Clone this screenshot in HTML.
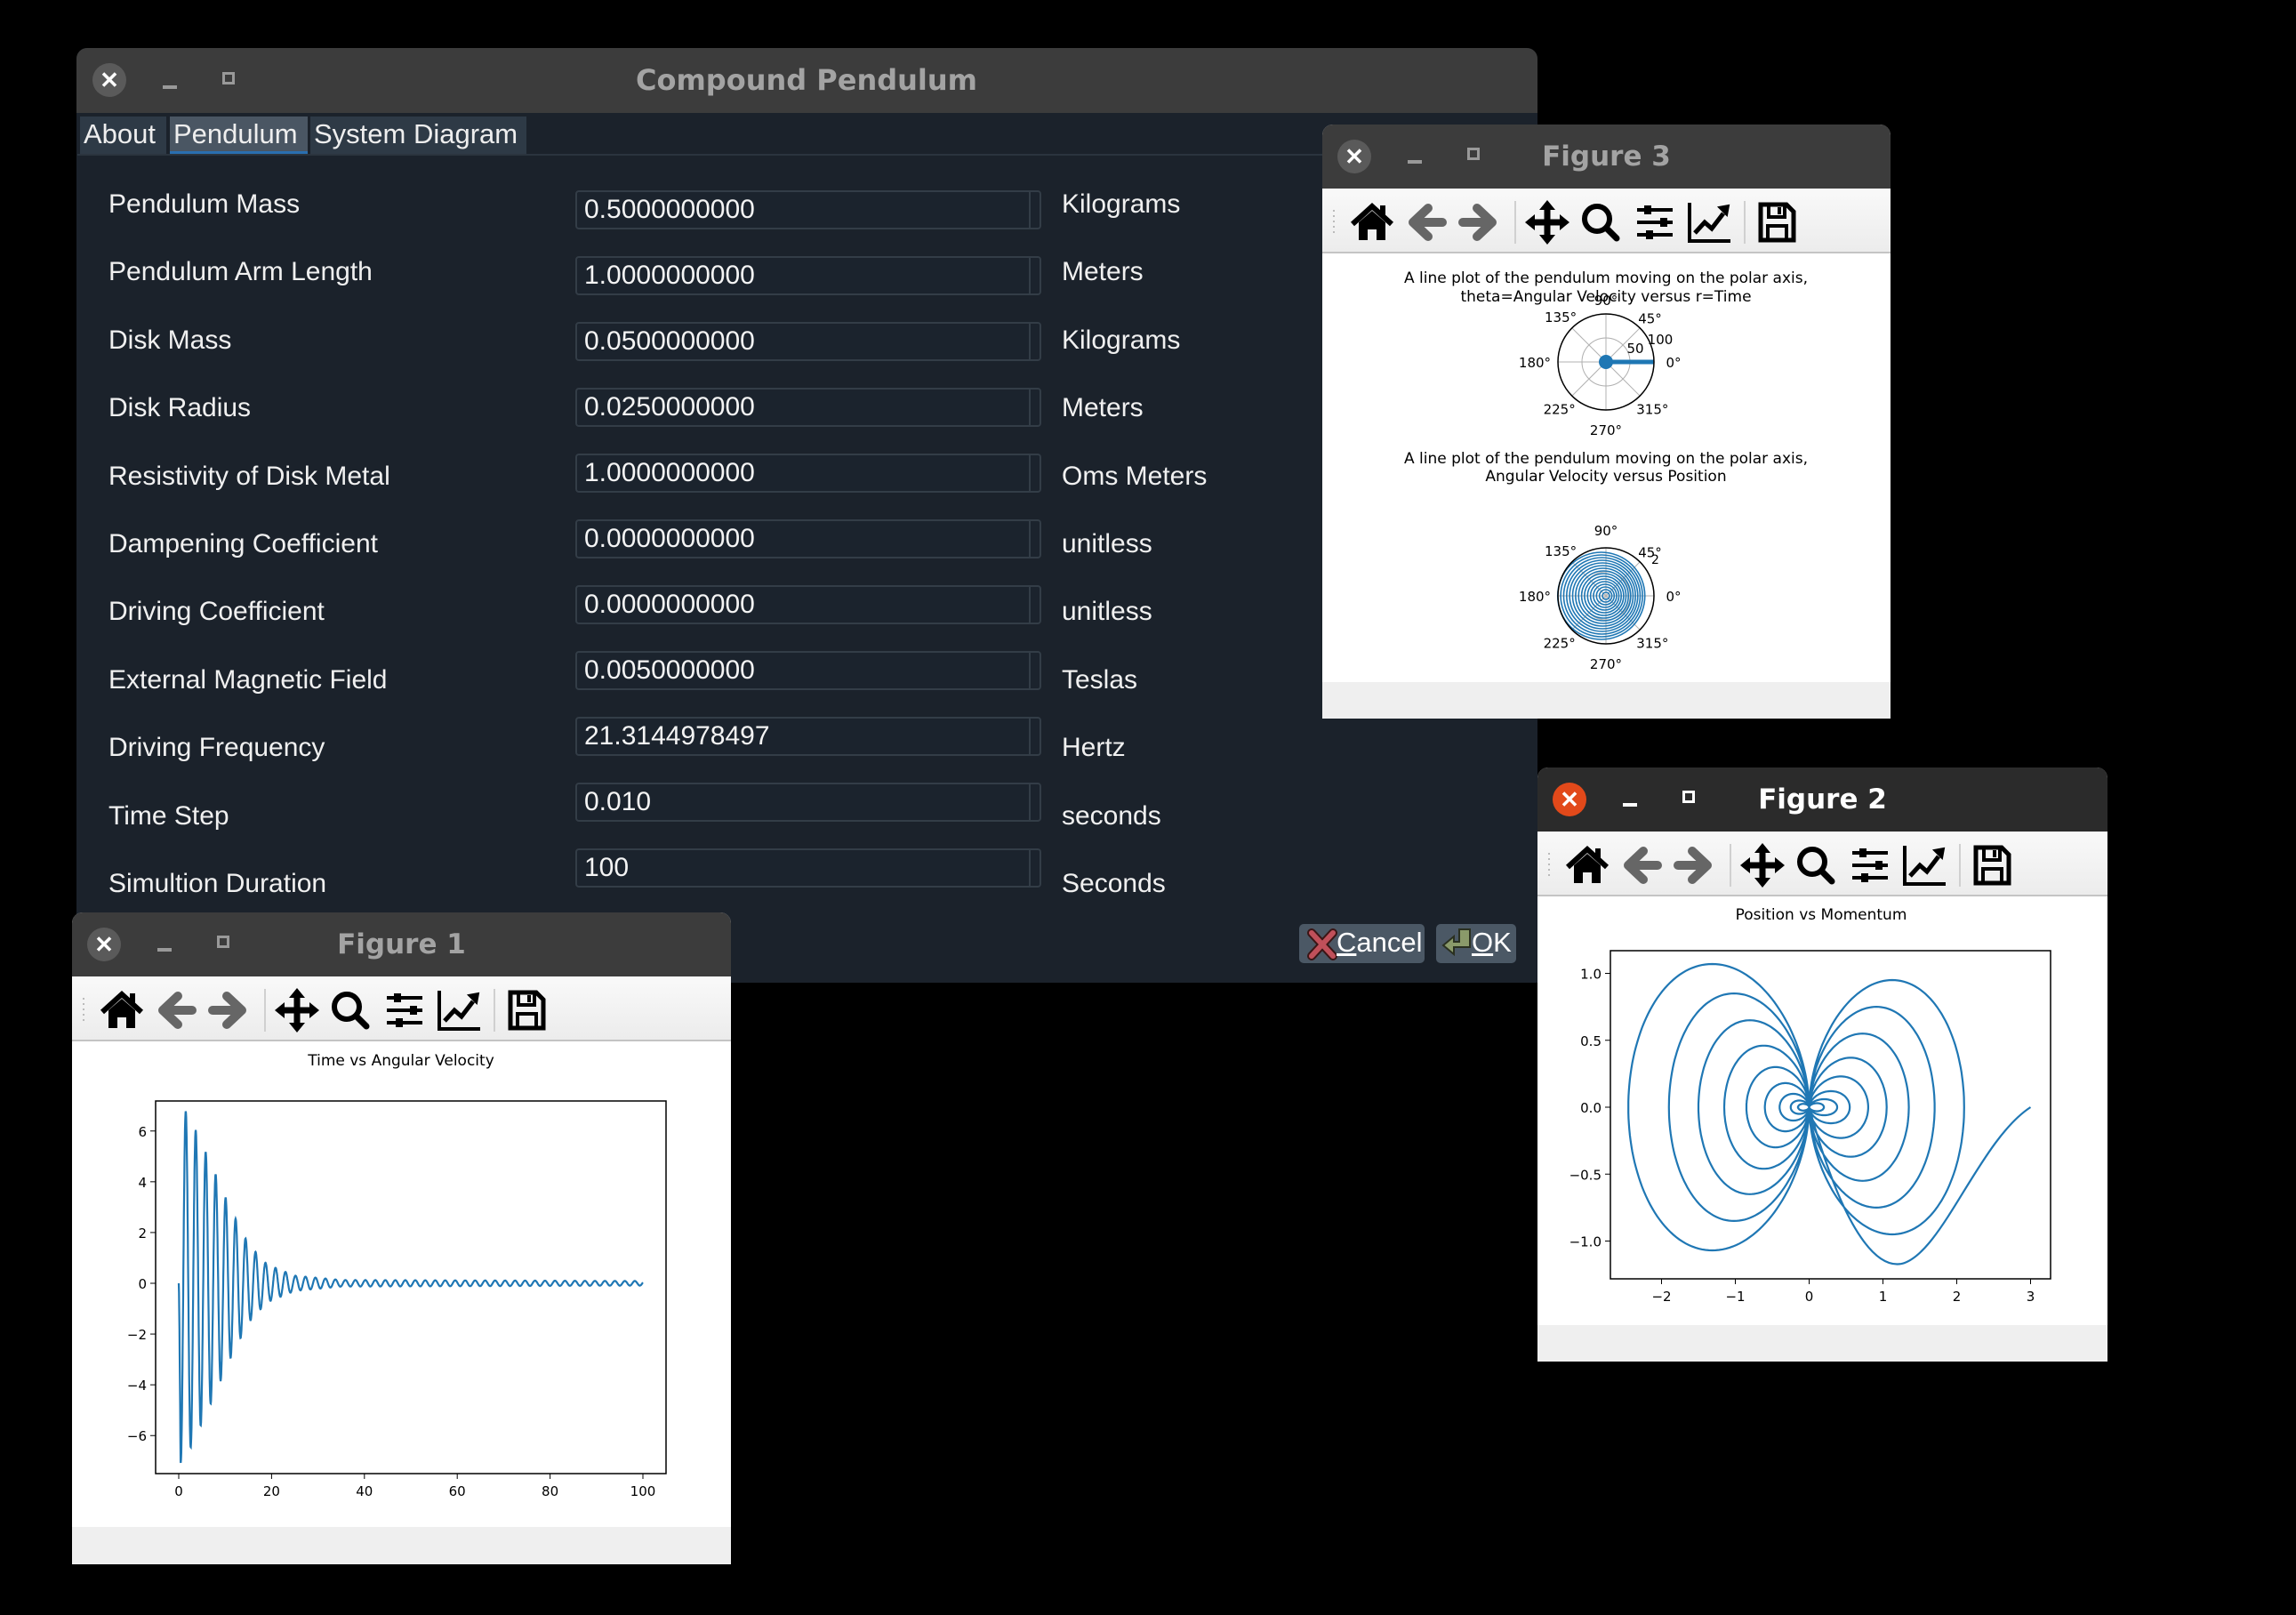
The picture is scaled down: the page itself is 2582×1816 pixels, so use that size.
<!DOCTYPE html>
<html><head><meta charset="utf-8"><style>
*{margin:0;padding:0;box-sizing:border-box}
body{width:2582px;height:1816px;background:#000;position:relative;overflow:hidden;font-family:"Liberation Sans",sans-serif}
.win{position:absolute;overflow:hidden;border-radius:12px 12px 0 0}
.tb{position:absolute;left:0;top:0;right:0;background:#3c3c3c}
.ttl{position:absolute;top:0;width:100%;text-align:center;font-weight:bold;color:#a3a3a3;font-size:31px;font-family:"DejaVu Sans",sans-serif}
.cl{position:absolute;width:38px;height:38px;border-radius:50%;background:#5a5a5a;color:#fff;font-size:26px;font-weight:bold;text-align:center;line-height:38px}
.mn{position:absolute;width:16px;height:4px;background:#999}
.mx{position:absolute;width:14px;height:14px;border:3px solid #999}
.lab{position:absolute;left:122px;color:#f0f0f0;font-size:30px}
.unit{position:absolute;left:1194px;color:#f0f0f0;font-size:30px}
.inp{position:absolute;left:647px;width:524px;height:44px;background:#1b232d;border:2px solid #333d47;border-radius:4px;color:#f4f4f4;font-size:30px;padding-left:8px;line-height:40px}
.inp:after{content:"";position:absolute;right:10px;top:0;bottom:0;border-left:2px solid #333d47}
.tab{position:absolute;top:131px;height:42px;background:#2e3a46;color:#eee;font-size:31px;line-height:40px;padding:0 4px}
.btn{position:absolute;top:1039px;height:44px;background:#4b5865;border-radius:5px;color:#fff;font-size:31px;line-height:42px}
.tool{position:absolute;left:0;right:0;height:73px;background:linear-gradient(#f9f9f9,#ececec);border-bottom:2px solid #c4c4c4}
.plot{position:absolute;left:0;right:0;background:#fff}
svg text{font-family:"DejaVu Sans",sans-serif}
</style></head><body>

<div class="win" style="left:86px;top:54px;width:1643px;height:1051px;background:#1b222b">
 <div class="tb" style="height:73px"></div>
 <div class="cl" style="left:18px;top:17px">✕</div>
 <div class="mn" style="left:97px;top:42px"></div>
 <div class="mx" style="left:164px;top:27px"></div>
 <div class="ttl" style="left:0;width:1642px;line-height:73px;font-size:32px">Compound Pendulum</div>
</div>
<div class="tab" style="left:90px;width:97px">About</div>
<div class="tab" style="left:191px;width:155px;background:#4a5663;border-bottom:3px solid #2a6fb0">Pendulum</div>
<div class="tab" style="left:349px;width:243px">System Diagram</div>
<div style="position:absolute;left:87px;top:173px;width:1642px;height:2px;background:#2b343e"></div>

<div class="lab" style="top:213px">Pendulum Mass</div>
<div class="lab" style="top:289px">Pendulum Arm Length</div>
<div class="lab" style="top:366px">Disk Mass</div>
<div class="lab" style="top:442px">Disk Radius</div>
<div class="lab" style="top:519px">Resistivity of Disk Metal</div>
<div class="lab" style="top:595px">Dampening Coefficient</div>
<div class="lab" style="top:671px">Driving Coefficient</div>
<div class="lab" style="top:748px">External Magnetic Field</div>
<div class="lab" style="top:824px">Driving Frequency</div>
<div class="lab" style="top:901px">Time Step</div>
<div class="lab" style="top:977px">Simultion Duration</div>

<div class="unit" style="top:213px">Kilograms</div>
<div class="unit" style="top:289px">Meters</div>
<div class="unit" style="top:366px">Kilograms</div>
<div class="unit" style="top:442px">Meters</div>
<div class="unit" style="top:519px">Oms Meters</div>
<div class="unit" style="top:595px">unitless</div>
<div class="unit" style="top:671px">unitless</div>
<div class="unit" style="top:748px">Teslas</div>
<div class="unit" style="top:824px">Hertz</div>
<div class="unit" style="top:901px">seconds</div>
<div class="unit" style="top:977px">Seconds</div>

<div class="inp" style="top:214px">0.5000000000</div>
<div class="inp" style="top:288px">1.0000000000</div>
<div class="inp" style="top:362px">0.0500000000</div>
<div class="inp" style="top:436px">0.0250000000</div>
<div class="inp" style="top:510px">1.0000000000</div>
<div class="inp" style="top:584px">0.0000000000</div>
<div class="inp" style="top:658px">0.0000000000</div>
<div class="inp" style="top:732px">0.0050000000</div>
<div class="inp" style="top:806px">21.3144978497</div>
<div class="inp" style="top:880px">0.010</div>
<div class="inp" style="top:954px">100</div>

<div class="btn" style="left:1461px;width:141px"><svg width="40" height="40" style="position:absolute;left:6px;top:2px"><path d="M8 8 L32 34 M32 8 L8 34" stroke="#3a1515" stroke-width="10" stroke-linecap="round"/><path d="M8 8 L32 34 M32 8 L8 34" stroke="#c0505a" stroke-width="6" stroke-linecap="round"/></svg><span style="position:absolute;left:42px"><u>C</u>ancel</span></div>
<div class="btn" style="left:1615px;width:90px"><svg width="40" height="40" style="position:absolute;left:4px;top:2px"><path d="M22 4 H34 V24 H16 V32 L4 22 L16 12 V18 H22Z" fill="#8a9a6a" stroke="#2a3020" stroke-width="2"/></svg><span style="position:absolute;left:40px"><u>O</u>K</span></div>

<div class="win" style="left:1487px;top:140px;width:639px;height:668px;background:#efefef">
 <div class="tb" style="height:72px"></div>
 <div class="cl" style="left:17px;top:17px">✕</div>
 <div class="mn" style="left:96px;top:40px"></div>
 <div class="mx" style="left:163px;top:26px"></div>
 <div class="ttl" style="line-height:72px">Figure 3</div>
 <div class="tool" style="top:72px"><svg class="icons" width="639" height="73"></svg></div>
 <div class="plot" style="top:145px;height:482px">
  <svg width="639" height="482" viewBox="1487 285 639 482">
   <g font-size="17" text-anchor="middle" fill="#000">
    <text x="1806" y="318">A line plot of the pendulum moving on the polar axis,</text>
    <text x="1806" y="339">theta=Angular Velocity versus r=Time</text>
   </g>
   <g id="p1"></g>
   <g font-size="17" text-anchor="middle" fill="#000">
    <text x="1806" y="521">A line plot of the pendulum moving on the polar axis,</text>
    <text x="1806" y="541">Angular Velocity versus Position</text>
   </g>
   <g id="p2"></g>
  </svg>
 </div>
</div>

<div class="win" style="left:81px;top:1026px;width:741px;height:733px;background:#efefef">
 <div class="tb" style="height:72px"></div>
 <div class="cl" style="left:17px;top:17px">✕</div>
 <div class="mn" style="left:96px;top:40px"></div>
 <div class="mx" style="left:163px;top:26px"></div>
 <div class="ttl" style="line-height:72px">Figure 1</div>
 <div class="tool" style="top:72px"><svg class="icons" width="741" height="73"></svg></div>
 <div class="plot" style="top:145px;height:546px">
  <svg width="741" height="546" viewBox="81 1171 741 546">
   <text x="451" y="1198" font-size="17" text-anchor="middle">Time vs Angular Velocity</text>
   <g id="ax1"></g>
  </svg>
 </div>
</div>

<div class="win" style="left:1729px;top:863px;width:641px;height:668px;background:#efefef">
 <div class="tb" style="height:72px;background:#2b2b2b"></div>
 <div class="cl" style="left:17px;top:17px;background:#e2491a">✕</div>
 <div class="mn" style="left:96px;top:40px;background:#fff"></div>
 <div class="mx" style="left:163px;top:26px;border-color:#fff"></div>
 <div class="ttl" style="line-height:72px;color:#fff">Figure 2</div>
 <div class="tool" style="top:72px"><svg class="icons" width="641" height="73"></svg></div>
 <div class="plot" style="top:145px;height:482px">
  <svg width="641" height="482" viewBox="1729 1008 641 482">
   <text x="2048" y="1034" font-size="17" text-anchor="middle">Position vs Momentum</text>
   <g id="ax2"></g>
  </svg>
 </div>
</div>

<script>
var icons=''+
'<g transform="translate(56,38)"><path d="M-22 2 L0 -18 L22 2" stroke="#000" stroke-width="6" fill="none"/><path d="M-15 0 L0 -13 L15 0 V20 H5 V8 H-5 V20 H-15Z"/><rect x="9" y="-19" width="6" height="12"/></g>'+
'<g transform="translate(117,38)" stroke="#666" stroke-width="10" stroke-linecap="round" stroke-linejoin="round" fill="none"><path d="M18 0 H-12 M2 -16 L-15 0 L2 16"/></g>'+
'<g transform="translate(176,38)" stroke="#666" stroke-width="10" stroke-linecap="round" stroke-linejoin="round" fill="none"><path d="M-18 0 H12 M-2 -16 L15 0 L-2 16"/></g>'+
'<line x1="217" y1="14" x2="217" y2="62" stroke="#d0d0d0" stroke-width="2"/>'+
'<g transform="translate(253,38)"><path d="M0 -18 V18 M-18 0 H18" stroke="#000" stroke-width="7"/><path d="M0 -25 L-9 -14 H9Z M0 25 L-9 14 H9Z M-25 0 L-14 -9 V9Z M25 0 L14 -9 V9Z"/></g>'+
'<g transform="translate(313,38)" fill="none" stroke="#000"><circle cx="-4" cy="-4" r="14" stroke-width="6"/><path d="M7 7 L18 18" stroke-width="7" stroke-linecap="round"/></g>'+
'<g transform="translate(374,38)"><path d="M-20 -14 H20 M-20 0 H20 M-20 14 H20" stroke="#000" stroke-width="4"/><rect x="-12" y="-19" width="8" height="10"/><rect x="6" y="-5" width="8" height="10"/><rect x="-10" y="9" width="8" height="10"/></g>'+
'<g transform="translate(436,38)" fill="none" stroke="#000"><path d="M-23 -22 V21 H23" stroke-width="4"/><path d="M-17 12 L-6 0 L2 7 L15 -10" stroke-width="5"/><path d="M10 -17 L21 -19 L19 -8Z" fill="#000" stroke-width="2"/></g>'+
'<line x1="475" y1="14" x2="475" y2="62" stroke="#d0d0d0" stroke-width="2"/>'+
'<g transform="translate(511,38)" fill="none" stroke="#000" stroke-width="5"><path d="M-18 -20 H11 L19 -12 V20 H-18Z"/><path d="M-9 -20 V-6 H9 V-20" stroke-width="4"/><path d="M-10 20 V4 H11 V20" stroke-width="4"/><rect x="1" y="-17" width="4" height="8" fill="#000" stroke="none"/></g>'+
'<g fill="#bbb"><rect x="12" y="24" width="2" height="2"/><rect x="12" y="30" width="2" height="2"/><rect x="12" y="36" width="2" height="2"/><rect x="12" y="42" width="2" height="2"/><rect x="12" y="48" width="2" height="2"/></g>';
document.querySelectorAll('.icons').forEach(function(s){s.innerHTML=icons;});

function P(pts){return 'M'+pts.map(function(p){return p[0].toFixed(1)+' '+p[1].toFixed(1)}).join(' L');}
(function(){
 var g='',L=175,R=749,T=1238,B=1657;
 g+='<rect x="'+L+'" y="'+T+'" width="'+(R-L)+'" height="'+(B-T)+'" fill="none" stroke="#000" stroke-width="1.5"/>';
 function X(t){return 201+t*5.22} function Y(v){return 1443-v*28.54}
 for(var v=-6;v<=6;v+=2){var y=Y(v);g+='<line x1="'+(L-6)+'" y1="'+y+'" x2="'+L+'" y2="'+y+'" stroke="#000"/><text x="'+(L-10)+'" y="'+(y+6)+'" font-size="15" text-anchor="end">'+(v<0?'−'+(-v):v)+'</text>';}
 for(var t=0;t<=100;t+=20){var x=X(t);g+='<line x1="'+x+'" y1="'+B+'" x2="'+x+'" y2="'+(B+6)+'" stroke="#000"/><text x="'+x+'" y="'+(B+25)+'" font-size="15" text-anchor="middle">'+t+'</text>';}
 var E=[[0,7.2],[2.5,6.5],[7,4.7],[11,3],[15,1.55],[19,0.75],[25,0.3],[35,0.13],[100,0.09]];
 function A(t){for(var i=1;i<E.length;i++){if(t<=E[i][0]){var a=E[i-1],b=E[i];return a[1]+(b[1]-a[1])*(t-a[0])/(b[0]-a[0]);}}return 0.09}
 var pts=[];for(var t=0;t<=100;t+=0.05){pts.push([X(t),Y(-A(t)*Math.sin(2*Math.PI*(t+0.1)/2.15)*(t<0.4?t/0.4:1))]);}
 g+='<path d="'+P(pts)+'" fill="none" stroke="#1f77b4" stroke-width="2.2"/>';
 document.getElementById('ax1').innerHTML=g;
})();
(function(){
 var g='',L=1811,R=2306,T=1069,B=1438;
 g+='<rect x="'+L+'" y="'+T+'" width="'+(R-L)+'" height="'+(B-T)+'" fill="none" stroke="#000" stroke-width="1.5"/>';
 function X(v){return 2034.5+v*83} function Y(v){return 1245-v*150.5}
 var yl=[[1,'1.0'],[0.5,'0.5'],[0,'0.0'],[-0.5,'−0.5'],[-1,'−1.0']];
 yl.forEach(function(k){var y=Y(k[0]);g+='<line x1="'+(L-6)+'" y1="'+y+'" x2="'+L+'" y2="'+y+'" stroke="#000"/><text x="'+(L-10)+'" y="'+(y+6)+'" font-size="15" text-anchor="end">'+k[1]+'</text>';});
 for(var v=-2;v<=3;v++){var x=X(v);g+='<line x1="'+x+'" y1="'+B+'" x2="'+x+'" y2="'+(B+6)+'" stroke="#000"/><text x="'+x+'" y="'+(B+25)+'" font-size="15" text-anchor="middle">'+(v<0?'−'+(-v):v)+'</text>';}
 var left=[[2.45,1.07],[1.9,0.85],[1.5,0.65],[1.15,0.46],[0.85,0.3],[0.6,0.18],[0.4,0.1],[0.25,0.05],[0.15,0.025]];
 var right=[[2.1,0.95],[1.7,0.75],[1.35,0.55],[1.05,0.37],[0.8,0.23],[0.55,0.12],[0.38,0.06],[0.2,0.03]];
 var d='';
 function lobe(a,h,sg){var pts=[],N=160;for(var i=0;i<=N;i++){var s=Math.PI*i/N;var sn=Math.sin(s);pts.push([X(sg*a*Math.pow(sn,1.8)),Y(h*Math.sin(2*s))]);}return P(pts);}
 left.forEach(function(k){d+=lobe(k[0],k[1],-1);});
 right.forEach(function(k){d+=lobe(k[0],k[1],1);});
 d+='M'+X(0)+' '+Y(0)+' C'+X(0.5)+' '+Y(-1.0)+' '+X(0.95)+' '+Y(-1.2)+' '+X(1.25)+' '+Y(-1.17)+' C'+X(1.8)+' '+Y(-1.1)+' '+X(2.3)+' '+Y(-0.25)+' '+X(3)+' '+Y(0);
 g+='<path d="'+d+'" fill="none" stroke="#1f77b4" stroke-width="2.2"/>';
 document.getElementById('ax2').innerHTML=g;
})();
function polar(id,cx,cy,r,top90,extra){
 var g='';
 [0.5,1].forEach(function(f){g+='<circle cx="'+cx+'" cy="'+cy+'" r="'+(r*f)+'" fill="none" stroke="#b0b0b0" stroke-width="1"/>';});
 for(var k=0;k<8;k++){var a=k*Math.PI/4;g+='<line x1="'+cx+'" y1="'+cy+'" x2="'+(cx+r*Math.cos(a))+'" y2="'+(cy-r*Math.sin(a))+'" stroke="#b0b0b0"/>';}
 g+=extra;
 g+='<circle cx="'+cx+'" cy="'+cy+'" r="'+r+'" fill="none" stroke="#000" stroke-width="1.5"/>';
 var L=[[0,'0°',r+22,0],[45,'45°',r+16,-4],[90,'90°',r+20,0],[135,'135°',r+18,-4],[180,'180°',r+26,0],[225,'225°',r+20,4],[270,'270°',r+22,0],[315,'315°',r+20,4]];
 L.forEach(function(l){if(!top90&&l[0]==90)return;var a=l[0]*Math.PI/180;g+='<text x="'+(cx+l[2]*Math.cos(a))+'" y="'+(cy-l[2]*Math.sin(a)+6)+'" font-size="15" text-anchor="middle">'+l[1]+'</text>';});
 document.getElementById(id).innerHTML=g;
}
var ex1='<line x1="1806" y1="407" x2="1860" y2="407" stroke="#1f77b4" stroke-width="5"/><circle cx="1806" cy="407" r="8" fill="#1f77b4"/><text x="1839" y="397" font-size="15" text-anchor="middle">50</text><text x="1867" y="387" font-size="15" text-anchor="middle">100</text><text x="1806" y="343" font-size="15" text-anchor="middle">90°</text>';
polar('p1',1806,407,54,false,ex1);
var ex2='';for(var k=0;k<16;k++){var rr=4+k*3;ex2+='<circle cx="'+(1806-k*0.35)+'" cy="670" r="'+rr+'" fill="none" stroke="#1f77b4" stroke-width="1.6"/>';}
ex2+='<text x="1857" y="634" font-size="14">2</text>';
polar('p2',1806,670,54,true,ex2);
</script>
</body></html>
